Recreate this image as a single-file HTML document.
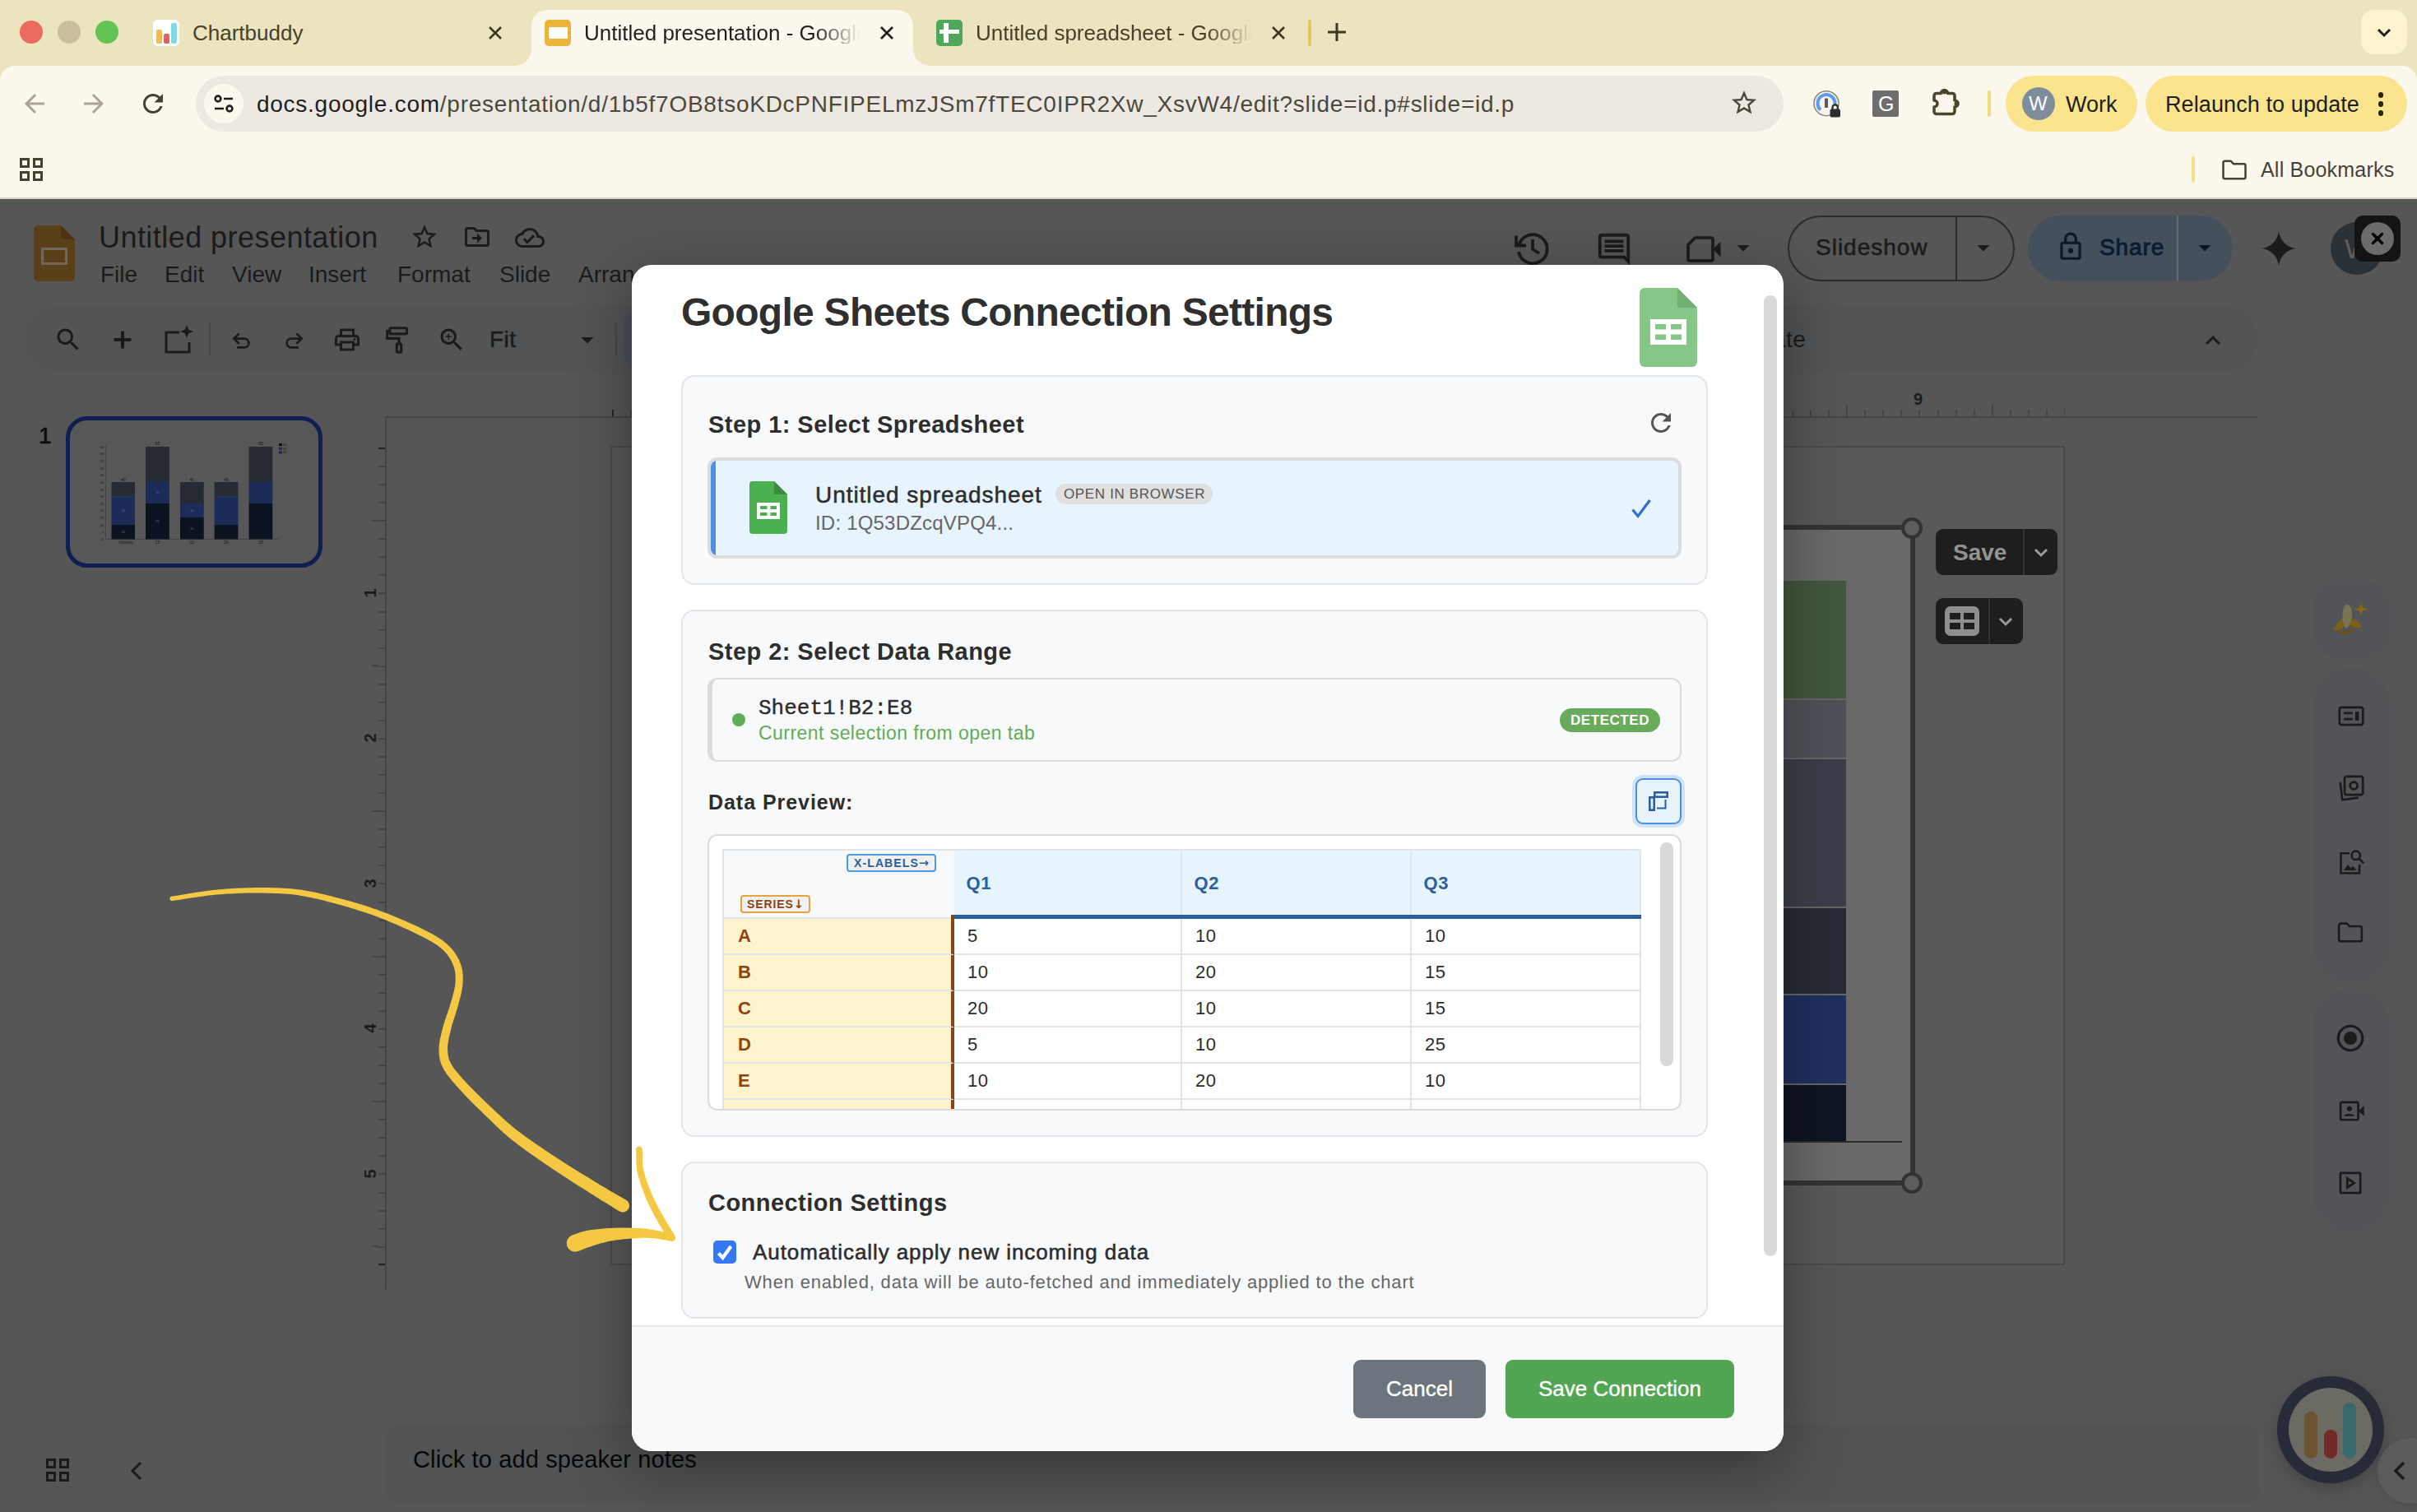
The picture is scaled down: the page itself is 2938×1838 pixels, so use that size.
<!DOCTYPE html>
<html lang="en">
<head>
<meta charset="utf-8">
<title>Untitled presentation - Google Slides</title>
<style>
*{box-sizing:border-box;margin:0;padding:0}
html,body{width:2938px;height:1838px;overflow:hidden;background:#565656}
body{position:relative;font-family:"Liberation Sans",sans-serif;color:#1f1f1f}
.a{position:absolute}
.t{position:absolute;white-space:nowrap;line-height:1}
svg{position:absolute;overflow:visible}
/* ---------- browser chrome ---------- */
#tabstrip{left:0;top:0;width:2938px;height:110px;background:#ece4bf}
#toolbar{left:0;top:80px;width:2938px;height:160px;background:#fdf8ed;border-radius:18px 18px 0 0}
#chromeline{left:0;top:240px;width:2938px;height:2px;background:#d9d3c2}
.tabtxt{font-size:26px;color:#45412a;top:27px;letter-spacing:0}
#omni{left:238px;top:92px;width:1930px;height:68px;border-radius:34px;background:#ede9e2}
.chip{border-radius:34px;background:#fbe48e;height:68px;top:92px}
/* ---------- dimmed page ---------- */
#page{left:0;top:0;width:2938px;height:1838px;background:#565656;overflow:hidden}
.mn{top:320px;font-size:28px}
.rn{font-size:20px;font-weight:bold;color:#1b1b1b}
.rv{transform:rotate(-90deg);transform-origin:center}
.dk{color:#1b1b1b}
/* ---------- modal ---------- */
#modal{left:768px;top:322px;width:1400px;height:1442px;border-radius:24px;background:#fff;box-shadow:0 20px 70px rgba(0,0,0,.36);overflow:hidden}
.card{background:#f8f9fa;border:2px solid #e2e5e9;border-radius:16px}
.h3{font-weight:bold;font-size:29px;color:#2d2d2d;letter-spacing:.45px}

.btn{border-radius:9px;color:#fff;-webkit-text-stroke:.35px #fff;font-size:26px;text-align:center;line-height:71px;white-space:nowrap}
table.pv{border-collapse:separate;table-layout:fixed;font-size:22px;color:#2d2d2d}
table.pv td,table.pv th{height:44px;padding:0 0 0 16px;text-align:left;vertical-align:middle;border-right:2px solid #e1e4e8;border-bottom:2px solid #e1e4e8;background:#fff;font-weight:normal;letter-spacing:.5px;white-space:nowrap}
table.pv th{padding-left:14.500px;height:85px;background:#e7f3fd;color:#2c5f9e;font-weight:bold;border-top:2px solid #e1e4e8;border-bottom:4px solid #2c5f9e;font-size:22px;letter-spacing:.6px}
table.pv th.c0{background:#f8f9fa;border-left:2px solid #e1e4e8;border-bottom:2px solid #e1e4e8;border-right:none;position:relative}
table.pv td.rl{background:#fdf3cd;color:#8b4513;font-weight:bold;border-left:2px solid #e1e4e8;border-right:4px solid #8b4513;padding-left:17px}
.xl,.sr{position:absolute;font-size:14px;font-weight:bold;letter-spacing:1.1px;line-height:18px;height:22px;border-radius:4px;background:#f0f0f0;white-space:nowrap}
.xl{right:22px;top:4px;border:2px solid #4a9be0;color:#2c5f9e;padding:0 7px}
.sr{left:20px;bottom:5px;border:2px solid #e6a23c;color:#8b4513;padding:0 6px;letter-spacing:.9px}
.ar{font-family:"DejaVu Sans",sans-serif;font-size:14.500px;letter-spacing:0;line-height:14px}
</style>
</head>
<body>
<!-- ======= PAGE (dimmed Google Slides) ======= -->
<div class="a" id="page">
<!--PAGE-START-->
<!-- slides header -->
<svg style="left:41px;top:274px" width="50" height="68" viewBox="0 0 50 68"><path d="M5 0h28l17 17v46a5 5 0 0 1-5 5H5a5 5 0 0 1-5-5V5a5 5 0 0 1 5-5z" fill="#5a4018"/><path d="M33 0l17 17H37a4 4 0 0 1-4-4z" fill="#4d3313"/><rect x="10.500" y="28.500" width="29" height="18" fill="none" stroke="#6f6759" stroke-width="3"/></svg>
<div class="t dk" style="left:120px;top:271px;font-size:36px;letter-spacing:.45px">Untitled presentation</div>
<svg style="left:498px;top:270px" width="36" height="36" viewBox="0 0 24 24"><path d="M22 9.24l-7.19-.62L12 2 9.19 8.630 2 9.240l5.460 4.730L5.820 21 12 17.270 18.180 21l-1.630-7.030L22 9.240zM12 15.400l-3.760 2.270 1-4.280-3.320-2.880 4.380-.38L12 6.100l1.710 4.040 4.380.38-3.320 2.880 1 4.280L12 15.400z" fill="#1b1b1b"/></svg>
<svg style="left:562px;top:270px" width="36" height="36" viewBox="0 0 24 24"><path d="M20 6h-8l-2-2H4c-1.100 0-2 .9-2 2v12c0 1.100.9 2 2 2h16c1.100 0 2-.9 2-2V8c0-1.100-.9-2-2-2zm0 12H4V6h5.170l2 2H20v10zm-8-1l4-4-4-4v3H8v2h4v3z" fill="#1b1b1b"/></svg>
<svg style="left:626px;top:271px" width="36" height="36" viewBox="0 0 24 24"><path d="M19.350 10.040C18.670 6.590 15.640 4 12 4 9.110 4 6.600 5.640 5.350 8.040 2.340 8.360 0 10.910 0 14c0 3.310 2.690 6 6 6h13c2.760 0 5-2.240 5-5 0-2.640-2.050-4.780-4.650-4.960zM19 18H6c-2.210 0-4-1.790-4-4 0-2.050 1.530-3.760 3.560-3.970l1.070-.11.5-.95C8.080 7.140 9.940 6 12 6c2.620 0 4.880 1.860 5.390 4.430l.3 1.500 1.530.11c1.560.1 2.780 1.410 2.780 2.960 0 1.650-1.350 3-3 3zm-9-3.820l-2.090-2.090L6.500 13.500 10 17l6.010-6.010-1.410-1.410z" fill="#1b1b1b"/></svg>
<div class="t dk mn" style="left:122px">File</div>
<div class="t dk mn" style="left:200px">Edit</div>
<div class="t dk mn" style="left:282px">View</div>
<div class="t dk mn" style="left:375px">Insert</div>
<div class="t dk mn" style="left:483px">Format</div>
<div class="t dk mn" style="left:607px">Slide</div>
<div class="t dk mn" style="left:703px">Arrange</div>
<div class="t dk mn" style="left:832px">Tools</div>
<div class="t dk mn" style="left:926px">Extensions</div>
<div class="t dk mn" style="left:1098px">Help</div>
<!-- toolbar pill -->
<div class="a" style="left:30px;top:372px;width:2714px;height:80px;border-radius:40px;background:#535456"></div>
<svg style="left:65px;top:395px" width="36" height="36" viewBox="0 0 24 24"><path d="M15.500 14h-.79l-.28-.27C15.410 12.590 16 11.110 16 9.500 16 5.910 13.090 3 9.500 3S3 5.910 3 9.500 5.910 16 9.500 16c1.610 0 3.090-.59 4.230-1.570l.27.28v.79l5 4.990L20.490 19l-4.990-5zm-6 0C7.010 14 5 11.990 5 9.500S7.010 5 9.500 5 14 7.010 14 9.500 11.990 14 9.500 14z" fill="#1b1b1b"/></svg>
<svg style="left:131px;top:395px" width="36" height="36" viewBox="0 0 24 24"><path d="M12 5v14M5 12h14" stroke="#1b1b1b" stroke-width="2.700" fill="none"/></svg>
<svg style="left:198px;top:394px" width="38" height="38" viewBox="0 0 38 38" fill="none" stroke="#1b1b1b" stroke-width="3"><path d="M20 10H4v24h28V22"/><path d="M29 1l2.200 5.800L37 9l-5.800 2.200L29 17l-2.200-5.800L21 9l5.800-2.200z" fill="#1b1b1b" stroke="none"/></svg>
<div class="a" style="left:254px;top:392px;width:2px;height:40px;background:#464749"></div>
<svg style="left:276px;top:396px" width="36" height="36" viewBox="0 0 24 24"><path d="M7.800 9.500H14a4.500 4.500 0 0 1 0 9H8v-1.800h6a2.700 2.700 0 0 0 0-5.400H7.800l2.600 2.600-1.300 1.300L4.300 10.400l4.800-4.800 1.300 1.300z" fill="#1b1b1b"/></svg>
<svg style="left:339px;top:396px" width="36" height="36" viewBox="0 0 24 24"><path d="M16.200 9.500H10a4.500 4.500 0 0 0 0 9h6v-1.800h-6a2.700 2.700 0 0 1 0-5.400h6.200l-2.600 2.600 1.300 1.300 4.800-4.800-4.800-4.800-1.300 1.300z" fill="#1b1b1b"/></svg>
<svg style="left:404px;top:395px" width="36" height="36" viewBox="0 0 24 24"><path d="M19 8h-1V3H6v5H5c-1.660 0-3 1.340-3 3v6h4v4h12v-4h4v-6c0-1.660-1.340-3-3-3zM8 5h8v3H8V5zm8 12v2H8v-4h8v2zm2-2v-2H6v2H4v-4c0-.55.45-1 1-1h14c.55 0 1 .45 1 1v4h-2z" fill="#1b1b1b"/><circle cx="18" cy="11.500" r="1" fill="#1b1b1b"/></svg>
<svg style="left:466px;top:394px" width="38" height="38" viewBox="0 0 24 24" fill="none" stroke="#1b1b1b" stroke-width="2"><rect x="5" y="3" width="13" height="4.500" rx="1"/><path d="M5 5.200H3V11h9v4"/><rect x="10.300" y="15" width="3.400" height="6.500" rx=".8"/></svg>
<svg style="left:531px;top:395px" width="36" height="36" viewBox="0 0 24 24"><path d="M15.500 14h-.79l-.28-.27C15.410 12.590 16 11.110 16 9.500 16 5.910 13.090 3 9.500 3S3 5.910 3 9.500 5.910 16 9.500 16c1.610 0 3.090-.59 4.230-1.570l.27.28v.79l5 4.990L20.490 19l-4.990-5zm-6 0C7.010 14 5 11.990 5 9.500S7.010 5 9.500 5 14 7.010 14 9.500 11.990 14 9.500 14zm.5-7H9v2H7v1h2v2h1v-2h2V9h-2z" fill="#1b1b1b"/></svg>
<div class="t dk" style="left:595px;top:399px;font-size:28px;letter-spacing:.5px;-webkit-text-stroke:.5px #1b1b1b">Fit</div>
<svg style="left:696px;top:395px" width="36" height="36" viewBox="0 0 24 24"><path d="M7 10l5 5 5-5z" fill="#1b1b1b"/></svg>
<div class="a" style="left:748px;top:392px;width:2px;height:40px;background:#464749"></div>
<div class="a" style="left:758px;top:382px;width:80px;height:60px;border-radius:10px;background:#494f5d"></div>
<div class="t dk" style="left:2155px;top:399px;font-size:28px;letter-spacing:.5px">ate</div>
<svg style="left:2672px;top:396px" width="36" height="36" viewBox="0 0 24 24"><path d="M12 8l-6 6 1.410 1.410L12 10.830l4.590 4.580L18 14z" fill="#1b1b1b"/></svg>
<!-- header right -->
<svg style="left:1841px;top:280px" width="44" height="44" viewBox="0 0 44 44" fill="none" stroke="#1b1b1b" stroke-width="3.800"><path d="M5.500 17.500A17.500 17.500 0 1 1 5 26"/><path d="M2 6.500v12h12" stroke-linejoin="miter"/><path d="M22 11v12l8 5"/></svg>
<svg style="left:1939px;top:280px" width="46" height="46" viewBox="0 0 24 24"><path d="M21.990 4c0-1.100-.89-2-1.990-2H4c-1.100 0-2 .9-2 2v12c0 1.100.9 2 2 2h14l4 4-.01-18zM20 4v13.170L18.830 16H4V4h16zM6 12h12v2H6zm0-3h12v2H6zm0-3h12v2H6z" fill="#1b1b1b"/></svg>
<svg style="left:2050px;top:287px" width="42" height="32" viewBox="0 0 42 32"><path d="M10.500 2H30a2 2 0 0 1 2 2v24a2 2 0 0 1-2 2H4a2 2 0 0 1-2-2V10.500z" fill="none" stroke="#1b1b1b" stroke-width="3.600" stroke-linejoin="round"/><path d="M32 16l9.500-9.500v19z" fill="#1b1b1b"/></svg>
<svg style="left:2101px;top:283px" width="36" height="36" viewBox="0 0 24 24"><path d="M7 10l5 5 5-5z" fill="#1b1b1b"/></svg>
<div class="a" style="left:2173px;top:262px;width:276px;height:80px;border-radius:40px;border:2px solid #2b2b2b"></div>
<div class="a" style="left:2377px;top:263px;width:2px;height:78px;background:#2b2b2b"></div>
<div class="t dk" style="left:2207px;top:287px;font-size:28px;letter-spacing:1px;-webkit-text-stroke:.55px #1b1b1b">Slideshow</div>
<svg style="left:2393px;top:283px" width="36" height="36" viewBox="0 0 24 24"><path d="M7 10l5 5 5-5z" fill="#1b1b1b"/></svg>
<div class="a" style="left:2465px;top:262px;width:249px;height:80px;border-radius:40px;background:#44515d"></div>
<div class="a" style="left:2646px;top:262px;width:1.500px;height:80px;background:#646a6e"></div>
<svg style="left:2498px;top:281px" width="38" height="38" viewBox="0 0 24 24"><path d="M18 8h-1V6c0-2.760-2.240-5-5-5S7 3.240 7 6v2H6c-1.100 0-2 .9-2 2v10c0 1.100.9 2 2 2h12c1.100 0 2-.9 2-2V10c0-1.100-.9-2-2-2zM9 6c0-1.660 1.340-3 3-3s3 1.340 3 3v2H9V6zm9 14H6V10h12v10zm-6-3c1.100 0 2-.9 2-2s-.9-2-2-2-2 .9-2 2 .9 2 2 2z" fill="#0d1826"/></svg>
<div class="t" style="left:2552px;top:287px;font-size:28px;color:#0b1b33;letter-spacing:.9px;-webkit-text-stroke:.9px #0b1b33">Share</div>
<svg style="left:2662px;top:283px" width="36" height="36" viewBox="0 0 24 24"><path d="M7 10l5 5 5-5z" fill="#0d1826"/></svg>
<svg style="left:2749px;top:281px" width="42" height="42" viewBox="0 0 42 42"><path d="M21 0C22.500 11.500 30.500 19.500 42 21 30.500 22.500 22.500 30.500 21 42 19.500 30.500 11.500 22.500 0 21 11.500 19.500 19.500 11.500 21 0z" fill="#1b1b1b"/></svg>
<div class="a" style="left:2833px;top:270px;width:64px;height:64px;border-radius:50%;background:#2a3237"></div>
<div class="t" style="left:2850px;top:285px;font-size:34px;color:#5e5e5e">W</div>
<div class="a" style="left:2862px;top:262px;width:56px;height:56px;border-radius:10px;background:#131313"></div>
<div class="a" style="left:2870px;top:270px;width:40px;height:40px;border-radius:50%;background:#6b6b6b"></div>
<svg style="left:2881px;top:281px" width="18" height="18" viewBox="0 0 18 18"><path d="M3.500 3.500l11 11M14.500 3.500l-11 11" stroke="#000" stroke-width="3.400" stroke-linecap="round" fill="none"/></svg>
<!--PAGE-END-->
<!--PAGE2-START-->
<!-- filmstrip -->
<div class="t" style="left:47px;top:516px;font-size:28px;color:#0a0a0a;-webkit-text-stroke:.7px #0a0a0a">1</div>
<div class="a" style="left:80px;top:506px;width:312px;height:184px;border-radius:26px;border:5px solid #0f1f52;background:#575757"></div>
<svg style="left:86px;top:512px" width="300" height="172" viewBox="86 512 300 172" font-family="Liberation Sans, sans-serif" font-size="5" fill="#151515">
<path d="M128.500 542v113.500H338" fill="none" stroke="#444" stroke-width="1"/>
<g fill="#252a33"><rect x="135.500" y="586" width="28.500" height="17.500"/><rect x="177" y="543" width="28.800" height="43"/><rect x="219" y="586" width="28.700" height="26"/><rect x="260.600" y="586" width="28.800" height="17.500"/><rect x="302.600" y="543" width="28.700" height="43"/></g>
<g fill="#1b2c59"><rect x="135.500" y="603.500" width="28.500" height="34.500"/><rect x="177" y="586" width="28.800" height="26"/><rect x="219" y="612" width="28.700" height="17"/><rect x="260.600" y="603.500" width="28.800" height="34.500"/><rect x="302.600" y="586" width="28.700" height="26"/></g>
<g fill="#0c1320"><rect x="135.500" y="638" width="28.500" height="17.500"/><rect x="177" y="612" width="28.800" height="43.500"/><rect x="219" y="629" width="28.700" height="26.500"/><rect x="260.600" y="638" width="28.800" height="17.500"/><rect x="302.600" y="612" width="28.700" height="43.500"/></g>
<g text-anchor="middle"><text x="149.700" y="584.500">40</text><text x="191.400" y="541">65</text><text x="233.300" y="584.500">40</text><text x="275" y="584.500">40</text><text x="317" y="541">65</text>
<text x="153" y="661">Options</text><text x="191.400" y="661">15</text><text x="233.300" y="661">10</text><text x="275" y="661">20</text><text x="317" y="661">15</text></g>
<g text-anchor="end" font-size="4"><text x="126" y="657">0</text><text x="126" y="648.400">5</text><text x="126" y="639.700">10</text><text x="126" y="631">15</text><text x="126" y="622.400">20</text><text x="126" y="613.700">25</text><text x="126" y="605">30</text><text x="126" y="596.500">35</text><text x="126" y="587.800">40</text><text x="126" y="579">45</text><text x="126" y="570.500">50</text><text x="126" y="561.800">55</text><text x="126" y="553">60</text><text x="126" y="544.500">65</text></g>
<g font-size="4"><rect x="339" y="539" width="4" height="3" fill="#0c1320"/><rect x="339" y="543.700" width="4" height="3" fill="#1b2c59"/><rect x="339" y="548.400" width="4" height="3" fill="#252a33"/><text x="344" y="542">15</text><text x="344" y="546.700">10</text><text x="344" y="551.400">15</text></g>
<g fill="#6d7484" font-size="3.500" text-anchor="middle"><text x="149.700" y="622">20</text><text x="149.700" y="648">10</text><text x="191.400" y="600">15</text><text x="191.400" y="635">25</text><text x="233.300" y="622">10</text><text x="233.300" y="644">15</text></g>
</svg>
<!-- rulers -->
<div class="a" style="left:468px;top:506px;width:2276px;height:2px;background:#454545"></div>
<div class="a" style="left:468px;top:506px;width:2px;height:1061px;background:#454545"></div>
<div class="a" style="left:744px;top:498px;width:1766px;height:8px;background:repeating-linear-gradient(90deg,#454545 0,#454545 2px,transparent 2px,transparent 22.0625px)"></div>
<div class="a" style="left:832.250px;top:491px;width:1700px;height:8px;background:repeating-linear-gradient(90deg,#454545 0,#454545 2px,transparent 2px,transparent 176.500px)"></div>
<div class="a" style="left:460px;top:544px;width:8px;height:995px;background:repeating-linear-gradient(180deg,#454545 0,#454545 2px,transparent 2px,transparent 22.0625px)"></div>
<div class="a" style="left:452px;top:632.250px;width:8px;height:900px;background:repeating-linear-gradient(180deg,#454545 0,#454545 2px,transparent 2px,transparent 176.500px)"></div>
<div class="a" style="left:460px;top:544px;width:8px;height:2px;background:#262626"></div>
<div class="a" style="left:460px;top:1536px;width:8px;height:2px;background:#262626"></div>
<div class="t rn" style="left:2326px;top:475px">9</div>
<div class="t rn rv" style="left:444px;top:711px">1</div>
<div class="t rn rv" style="left:444px;top:887px">2</div>
<div class="t rn rv" style="left:444px;top:1064px">3</div>
<div class="t rn rv" style="left:444px;top:1240px">4</div>
<div class="t rn rv" style="left:444px;top:1417px">5</div>
<!-- slide canvas -->
<div class="a" style="left:744px;top:498px;width:2px;height:8px;background:#262626"></div>
<div class="a" style="left:742px;top:542px;width:1768px;height:996px;border:2px solid #494949;background:#585858"></div>
<!-- chart object on slide (visible part) -->
<div class="a" style="left:2100px;top:644px;width:224px;height:792px;background:#696969"></div>
<div class="a" style="left:2100px;top:706px;width:144px;height:143px;background:#42573b"></div>
<div class="a" style="left:2100px;top:849px;width:144px;height:72px;background:#4e5258;border-top:2px solid #666"></div>
<div class="a" style="left:2100px;top:921px;width:144px;height:181px;background:#3a3e48;border-top:2px solid #666"></div>
<div class="a" style="left:2100px;top:1102px;width:144px;height:106px;background:#272b35;border-top:2px solid #666"></div>
<div class="a" style="left:2100px;top:1208px;width:144px;height:109px;background:#1f305e;border-top:2px solid #666"></div>
<div class="a" style="left:2100px;top:1317px;width:144px;height:71px;background:#0f1422;border-top:2px solid #666"></div>
<div class="a" style="left:2100px;top:1387px;width:212px;height:2px;background:#2a2a2a"></div>
<div class="a" style="left:2100px;top:638px;width:228px;height:803px;border:6px solid #333;border-left:none"></div>
<div class="a" style="left:2311px;top:629px;width:26px;height:26px;border-radius:50%;border:4px solid #333;background:#5d5d5d"></div>
<div class="a" style="left:2311px;top:1425px;width:26px;height:26px;border-radius:50%;border:4px solid #333;background:#5d5d5d"></div>
<!-- save / table buttons -->
<div class="a" style="left:2353px;top:643px;width:148px;height:56px;border-radius:9px;background:#1e1e1e"></div>
<div class="a" style="left:2459px;top:643px;width:2px;height:56px;background:#333"></div>
<div class="t" style="left:2374px;top:658px;font-size:28px;font-weight:bold;color:#939393;letter-spacing:0">Save</div>
<svg style="left:2469px;top:660px" width="24" height="24" viewBox="0 0 24 24"><path d="M5 8l7 7 7-7" fill="none" stroke="#9a9a9a" stroke-width="3"/></svg>
<div class="a" style="left:2353px;top:727px;width:106px;height:56px;border-radius:9px;background:#1e1e1e"></div>
<div class="a" style="left:2417px;top:727px;width:2px;height:56px;background:#333"></div>
<svg style="left:2364px;top:737px" width="42" height="36" viewBox="0 0 42 36"><rect x="0" y="0" width="42" height="36" rx="7" fill="#8e8e8e"/><path d="M6 8h13v8H6zM23 8h13v8H23zM6 20h13v8H6zM23 20h13v8H23z" fill="#1e1e1e"/></svg>
<svg style="left:2426px;top:744px" width="24" height="24" viewBox="0 0 24 24"><path d="M5 8l7 7 7-7" fill="none" stroke="#9a9a9a" stroke-width="3"/></svg>
<!-- right side panel -->
<div class="a" style="left:2812px;top:706px;width:93px;height:94px;border-radius:32px;background:#535457"></div>
<div class="a" style="left:2812px;top:812px;width:93px;height:382px;border-radius:46px;background:#535457"></div>
<div class="a" style="left:2812px;top:1202px;width:93px;height:295px;border-radius:46px;background:#535457"></div>
<svg style="left:2834px;top:732px" width="44" height="44" viewBox="0 0 44 44"><path d="M5 34C10 41 24 40 30 30 24 35 13 37 5 34z" fill="#6b4e10"/><path d="M15 20C9 22 4 28 3 35 9 35 15 31 18 27z" fill="#7d5f17"/><path d="M23 20C30 21 35 25 37 31 31 32 25 30 21 27z" fill="#7d5f17"/><path d="M18 3C22 2 25 7 25 15 25 23 22 29 18 32 14 29 13 19 14 11 14.500 7 16 4 18 3z" fill="#7b7453"/><path d="M36 1l2 5.500 5.500 2-5.500 2-2 5.500-2-5.500-5.500-2 5.500-2z" fill="#8a6512"/></svg>
<svg style="left:2842px;top:857px" width="32" height="27" viewBox="0 0 36 30" fill="none" stroke="#1b1b1b" stroke-width="3"><rect x="2" y="3" width="32" height="24" rx="3"/><path d="M8 11h12M8 19h12" /><path d="M26 9v12" stroke-width="5"/></svg>
<svg style="left:2842px;top:942px" width="32" height="34" viewBox="0 0 36 38" fill="none" stroke="#1b1b1b" stroke-width="3"><rect x="9" y="2" width="25" height="25" rx="3"/><path d="M3 10l3 24 22-3"/><circle cx="21.500" cy="14.500" r="5"/></svg>
<svg style="left:2842px;top:1032px" width="33" height="33" viewBox="0 0 38 38" fill="none" stroke="#1b1b1b" stroke-width="3"><path d="M16 6H4v28h26V22"/><circle cx="25" cy="9" r="6"/><path d="M29.500 13.500L36 20"/><path d="M8 30l6-8 4 5 3-3 5 6z" fill="#1b1b1b" stroke="none"/></svg>
<svg style="left:2841px;top:1120px" width="32" height="26" viewBox="0 0 36 30" fill="none" stroke="#1b1b1b" stroke-width="3" stroke-linejoin="round"><path d="M2 6a3 3 0 0 1 3-3h8l4 4h14a3 3 0 0 1 3 3v15a3 3 0 0 1-3 3H5a3 3 0 0 1-3-3z"/></svg>
<svg style="left:2840px;top:1244.500px" width="34" height="34" viewBox="0 0 38 38"><circle cx="19" cy="19" r="16.500" fill="none" stroke="#1b1b1b" stroke-width="3.500"/><circle cx="19" cy="19" r="9" fill="#1b1b1b"/></svg>
<svg style="left:2843px;top:1338px" width="31" height="25" viewBox="0 0 34 28"><rect x="2" y="2" width="24" height="24" rx="2" fill="none" stroke="#1b1b1b" stroke-width="3"/><path d="M26 14l8-7v14z" fill="#1b1b1b"/><circle cx="14" cy="11" r="3.500" fill="#1b1b1b"/><path d="M7 21c0-4 14-4 14 0z" fill="#1b1b1b"/></svg>
<svg style="left:2843px;top:1424px" width="28" height="28" viewBox="0 0 30 30" fill="none" stroke="#1b1b1b" stroke-width="3"><rect x="2" y="2" width="26" height="26" rx="1"/><path d="M11 9v12l9-6z"/></svg>
<!-- speaker notes / bottom -->
<div class="a" style="left:469px;top:1731px;width:2277px;height:97px;border-radius:18px;background:#525355"></div>
<div class="t" style="left:502px;top:1760px;font-size:29px;color:#070707;letter-spacing:.12px">Click to add speaker notes</div>
<svg style="left:56px;top:1773px" width="28" height="28" viewBox="0 0 28 28" fill="none" stroke="#1b1b1b" stroke-width="3"><rect x="1.500" y="1.500" width="9" height="9"/><rect x="17.500" y="1.500" width="9" height="9"/><rect x="1.500" y="17.500" width="9" height="9"/><rect x="17.500" y="17.500" width="9" height="9"/></svg>
<svg style="left:157px;top:1776px" width="18" height="24" viewBox="0 0 18 24"><path d="M14 2L4 12l10 10" fill="none" stroke="#1b1b1b" stroke-width="3"/></svg>
<!-- chartbuddy FAB -->
<div class="a" style="left:2768px;top:1673px;width:130px;height:130px;border-radius:50%;background:#272a37;box-shadow:0 6px 18px rgba(0,0,0,.22)"></div>
<div class="a" style="left:2782px;top:1687px;width:102px;height:102px;border-radius:50%;background:#6b6a63"></div>
<div class="a" style="left:2801px;top:1716px;width:16px;height:57px;border-radius:8px;background:#6b5530"></div>
<div class="a" style="left:2825px;top:1738px;width:16px;height:35px;border-radius:8px;background:#722b29"></div>
<div class="a" style="left:2848px;top:1705px;width:16px;height:68px;border-radius:8px;background:#396a6c"></div>
<div class="a" style="left:2890px;top:1748px;width:80px;height:80px;border-radius:50%;background:#5a5b5d;box-shadow:0 2px 8px rgba(0,0,0,.14)"></div>
<svg style="left:2908px;top:1776px" width="18" height="24" viewBox="0 0 18 24"><path d="M14 2L4 12l10 10" fill="none" stroke="#1b1b1b" stroke-width="3.500"/></svg>
<!--PAGE2-END-->
</div>

<!-- ======= BROWSER CHROME ======= -->
<div class="a" id="tabstrip"></div>
<div class="a" id="toolbar"></div>
<div class="a" id="chromeline"></div>
<!--CHROME-START-->
<!-- traffic lights -->
<div class="a" style="left:24px;top:25px;width:28px;height:28px;border-radius:50%;background:#ec6a5e"></div>
<div class="a" style="left:70px;top:25px;width:28px;height:28px;border-radius:50%;background:#c9bf9d"></div>
<div class="a" style="left:116px;top:25px;width:28px;height:28px;border-radius:50%;background:#61c454"></div>
<!-- tab 1 -->
<div class="a" style="left:186px;top:24px;width:32px;height:32px;border-radius:6px;background:#fff"></div>
<div class="a" style="left:190px;top:36px;width:7px;height:17px;border-radius:2px;background:#f2b95b"></div>
<div class="a" style="left:199px;top:41px;width:7px;height:12px;border-radius:2px;background:#e3605c"></div>
<div class="a" style="left:208px;top:28px;width:7px;height:25px;border-radius:2px;background:#7edae4"></div>
<div class="t tabtxt" style="left:234px">Chartbuddy</div>
<svg style="left:590px;top:28px" width="24" height="24" viewBox="0 0 24 24"><path d="M5 5l14 14M19 5L5 19" stroke="#3b3827" stroke-width="2.6" fill="none"/></svg>
<!-- active tab -->
<svg style="left:622px;top:12px" width="512" height="70" viewBox="0 0 512 70"><path d="M0 70 L0 68 Q24 68 24 44 L24 22 Q24 0 46 0 L466 0 Q488 0 488 22 L488 44 Q488 68 512 68 L512 70 Z" fill="#fdf8ed"/></svg>
<div class="a" style="left:662px;top:24px;width:32px;height:32px;border-radius:5px;background:#ecb43c"></div>
<div class="a" style="left:667px;top:33px;width:23px;height:14px;background:#fff"></div>
<div class="t tabtxt" style="left:710px;color:#1f1f1f;width:338px;overflow:hidden;-webkit-mask-image:linear-gradient(90deg,#000 280px,transparent 336px);mask-image:linear-gradient(90deg,#000 280px,transparent 336px)">Untitled presentation - Google Slides</div>
<svg style="left:1066px;top:28px" width="24" height="24" viewBox="0 0 24 24"><path d="M5 5l14 14M19 5L5 19" stroke="#1f1f1f" stroke-width="2.6" fill="none"/></svg>
<!-- tab 3 -->
<div class="a" style="left:1138px;top:24px;width:32px;height:32px;border-radius:5px;background:#4fa75a"></div>
<div class="a" style="left:1147px;top:28px;width:6px;height:24px;background:#fff"></div>
<div class="a" style="left:1142px;top:36px;width:24px;height:5px;background:#fff"></div>
<div class="t tabtxt" style="left:1186px;width:338px;overflow:hidden;-webkit-mask-image:linear-gradient(90deg,#000 280px,transparent 336px);mask-image:linear-gradient(90deg,#000 280px,transparent 336px)">Untitled spreadsheet - Google Sheets</div>
<svg style="left:1542px;top:28px" width="24" height="24" viewBox="0 0 24 24"><path d="M5 5l14 14M19 5L5 19" stroke="#3b3827" stroke-width="2.6" fill="none"/></svg>
<div class="a" style="left:1590px;top:24px;width:4px;height:32px;border-radius:2px;background:#e3c55a"></div>
<svg style="left:1611px;top:25px" width="28" height="28" viewBox="0 0 28 28"><path d="M14 3v22M3 14h22" stroke="#3b3827" stroke-width="3" fill="none"/></svg>
<div class="a" style="left:2870px;top:12px;width:56px;height:54px;border-radius:16px;background:#fdf3cf"></div>
<svg style="left:2888px;top:30px" width="20" height="20" viewBox="0 0 20 20"><path d="M3 6l7 7 7-7" stroke="#1f1f1f" stroke-width="3" fill="none"/></svg>
<!-- toolbar -->
<svg style="left:24px;top:108px" width="36" height="36" viewBox="0 0 24 24"><path d="M20 11H7.83l5.59-5.59L12 4l-8 8 8 8 1.41-1.41L7.83 13H20v-2z" fill="#aaa598"/></svg>
<svg style="left:96px;top:108px" width="36" height="36" viewBox="0 0 24 24"><path d="M12 4l-1.41 1.41L16.17 11H4v2h12.17l-5.58 5.59L12 20l8-8z" fill="#aaa598"/></svg>
<svg style="left:168px;top:108px" width="36" height="36" viewBox="0 0 24 24"><path d="M17.65 6.35C16.2 4.9 14.21 4 12 4c-4.42 0-7.99 3.58-7.99 8s3.57 8 7.99 8c3.73 0 6.84-2.55 7.73-6h-2.08c-.82 2.33-3.04 4-5.65 4-3.31 0-6-2.69-6-6s2.69-6 6-6c1.66 0 3.14.69 4.22 1.78L13 11h7V4l-2.35 2.35z" fill="#45412f"/></svg>
<div class="a" id="omni"></div>
<div class="a" style="left:248px;top:102px;width:48px;height:48px;border-radius:50%;background:#fdf8ed"></div>
<svg style="left:258px;top:112px" width="28" height="28" viewBox="0 0 28 28" fill="none" stroke="#1f1f1f" stroke-width="2.6"><circle cx="7" cy="8" r="3.4"/><path d="M14 8h11M3 20h11"/><circle cx="21" cy="20" r="3.4"/></svg>
<div class="t" style="left:312px;top:112.500px;font-size:28px;letter-spacing:.74px;color:#4b483d"><span style="color:#1f1f1f">docs.google.com</span>/presentation/d/1b5f7OB8tsoKDcPNFIPELmzJSm7fTEC0IPR2Xw_XsvW4/edit?slide=id.p#slide=id.p</div>
<svg style="left:2102px;top:107px" width="36" height="36" viewBox="0 0 24 24"><path d="M22 9.24l-7.19-.62L12 2 9.19 8.63 2 9.24l5.46 4.73L5.82 21 12 17.27 18.18 21l-1.63-7.03L22 9.24zM12 15.4l-3.76 2.27 1-4.28-3.32-2.88 4.38-.38L12 6.1l1.71 4.04 4.38.38-3.32 2.88 1 4.28L12 15.4z" fill="#4a4739"/></svg>
<!-- ext icons -->
<svg style="left:2201px;top:107px" width="40" height="40" viewBox="0 0 40 40"><circle cx="19" cy="18.700" r="15" fill="#f4f3ee" stroke="#8b8a80" stroke-width="1.600"/><path d="M12 26.500A10.500 10.500 0 1 1 29.500 19" fill="none" stroke="#5b9cf0" stroke-width="4"/><rect x="17" y="12.500" width="4" height="11.500" rx="1" fill="#5a5a5a"/><rect x="23.500" y="25.500" width="12.500" height="10" rx="2" fill="#2d2d2d"/><path d="M26.500 26v-2.500a3.200 3.200 0 0 1 6.400 0V26" fill="none" stroke="#2d2d2d" stroke-width="2.400"/></svg>
<div class="a" style="left:2276px;top:110px;width:32px;height:32px;background:#6d6d6d;border-radius:2px"></div>
<div class="t" style="left:2283px;top:114px;font-size:25px;color:#fff">G</div>
<svg style="left:2348px;top:105px" width="38" height="38" viewBox="0 0 38 38"><path d="M6 8.500H11.500a4 4 0 0 1 8 0H25a3 3 0 0 1 3 3V17a4 4 0 0 1 0 8v5.500a3 3 0 0 1-3 3H6a3 3 0 0 1-3-3V25a4 4 0 0 0 0-8V11.500a3 3 0 0 1 3-3z" fill="none" stroke="#4b452e" stroke-width="3.600" stroke-linejoin="round"/><circle cx="15.500" cy="6.500" r="3" fill="#4b452e"/><circle cx="30.500" cy="21" r="3" fill="#4b452e"/></svg>
<div class="a" style="left:2416px;top:110px;width:4px;height:32px;border-radius:2px;background:#f3dc7c"></div>
<div class="a chip" style="left:2438px;width:160px"></div>
<div class="a" style="left:2458px;top:106px;width:40px;height:40px;border-radius:50%;background:#7d8d9c"></div>
<div class="t" style="left:2466px;top:114px;font-size:24px;color:#fff">W</div>
<div class="t" style="left:2511px;top:114px;font-size:27px;color:#1f1f1f">Work</div>
<div class="a chip" style="left:2608px;width:318px"></div>
<div class="t" style="left:2632px;top:114px;font-size:27px;letter-spacing:.1px;color:#1f1f1f">Relaunch to update</div>
<div class="a" style="left:2890.500px;top:112px;width:6.500px;height:6.500px;border-radius:50%;background:#2a2208;box-shadow:0 11px 0 #2a2208,0 22px 0 #2a2208"></div>
<!-- bookmarks bar -->
<svg style="left:24px;top:192px" width="28" height="28" viewBox="0 0 28 28" fill="none" stroke="#45412f" stroke-width="3"><rect x="1.500" y="1.500" width="9" height="9"/><rect x="17.500" y="1.500" width="9" height="9"/><rect x="1.500" y="17.500" width="9" height="9"/><rect x="17.500" y="17.500" width="9" height="9"/></svg>
<div class="a" style="left:2664px;top:190px;width:4px;height:32px;border-radius:2px;background:#f5df85"></div>
<svg style="left:2700px;top:193px" width="32" height="27" viewBox="0 0 34 30" fill="none" stroke="#46423a" stroke-width="2.8" stroke-linejoin="round"><path d="M2 5a2 2 0 0 1 2-2h8l4 4h14a2 2 0 0 1 2 2v16a2 2 0 0 1-2 2H4a2 2 0 0 1-2-2z"/></svg>
<div class="t" style="left:2748px;top:194px;font-size:25px;letter-spacing:.2px;color:#46423a">All Bookmarks</div>
<!--CHROME-END-->

<!-- ======= ARROW ======= -->
<!--ARROW-->

<!-- ======= MODAL ======= -->
<div class="a" id="modal">
<!--MODAL-START-->
<!-- coordinates inside modal are relative to (768,322) -->
<div class="t" style="left:60px;top:34px;font-size:48px;font-weight:bold;color:#2f2f2f;letter-spacing:-.72px">Google Sheets Connection Settings</div>
<!-- big sheets icon -->
<svg style="left:1225px;top:28px" width="70" height="96" viewBox="0 0 70 96"><path d="M6 0h40l24 24v66a6 6 0 0 1-6 6H6a6 6 0 0 1-6-6V6a6 6 0 0 1 6-6z" fill="#86c787"/><path d="M46 0l24 24H46z" fill="#74b076"/><path d="M13 38h44v31H13zM19 44v6.500h13V44zM38 44v6.500h13V44zM19 56.500V63h13v-6.500zM38 56.500V63h13v-6.500z" fill="#fff" fill-rule="evenodd"/></svg>
<!-- scrollbar -->
<div class="a" style="left:1376px;top:37px;width:16px;height:1168px;border-radius:8px;background:#d9d9d9"></div>

<!-- CARD 1 -->
<div class="a card" style="left:60px;top:134px;width:1248px;height:255px"></div>
<div class="t h3" style="left:93px;top:180px">Step 1: Select Spreadsheet</div>
<svg style="left:1233px;top:174px" width="36" height="36" viewBox="0 0 24 24"><path d="M17.650 6.350C16.200 4.900 14.210 4 12 4c-4.420 0-7.990 3.580-7.990 8s3.570 8 7.990 8c3.730 0 6.840-2.550 7.730-6h-2.080c-.82 2.330-3.040 4-5.650 4-3.310 0-6-2.690-6-6s2.690-6 6-6c1.660 0 3.140.69 4.220 1.780L13 11h7V4l-2.350 2.350z" fill="#555"/></svg>
<div class="a" style="left:92px;top:234px;width:1184px;height:123px;border-radius:12px;border:4px solid #dcdcde;background:#e7f3fd;overflow:hidden"><div class="a" style="left:0;top:0;width:6px;height:100%;background:#4a90e2"></div></div>
<svg style="left:143px;top:263px" width="46" height="64" viewBox="0 0 46 64"><path d="M4 0h26l16 16v44a4 4 0 0 1-4 4H4a4 4 0 0 1-4-4V4a4 4 0 0 1 4-4z" fill="#4caf50"/><path d="M30 0l16 16H30z" fill="#3b8a3e"/><path d="M9 26h28v20H9zM13 30v4h8.500v-4zM25.500 30v4H33v-4zM13 38v4h8.500v-4zM25.500 38v4H33v-4z" fill="#fff" fill-rule="evenodd"/></svg>
<div class="t" style="left:223px;top:265.500px;font-size:28px;color:#2d2d2d;letter-spacing:.95px;-webkit-text-stroke:.5px #2d2d2d">Untitled spreadsheet</div>
<div class="a" style="left:515px;top:266px;width:191px;height:25px;border-radius:13px;background:#e0e0e0"></div>
<div class="t" style="left:525px;top:270px;font-size:17px;color:#555;letter-spacing:.65px">OPEN IN BROWSER</div>
<div class="t" style="left:223px;top:302px;font-size:24px;color:#666;letter-spacing:.2px">ID: 1Q53DZcqVPQ4...</div>
<svg style="left:1214px;top:284px" width="26" height="24" viewBox="0 0 26 24"><path d="M2.500 13.500L9 21.500 23.500 2" fill="none" stroke="#2f6fd0" stroke-width="3.200"/></svg>

<!-- CARD 2 -->
<div class="a card" style="left:60px;top:419px;width:1248px;height:641px"></div>
<div class="t h3" style="left:93px;top:455.500px">Step 2: Select Data Range</div>
<div class="a" style="left:92px;top:502px;width:1184px;height:102px;border-radius:12px;border:2px solid #dcdcde;border-left-width:6px;background:#f8f9fa"></div>
<div class="a" style="left:122px;top:545px;width:16px;height:16px;border-radius:50%;background:#5fad56"></div>
<div class="t" style="left:154px;top:526px;font-size:26px;font-family:'Liberation Mono',monospace;color:#2d2d2d;-webkit-text-stroke:.4px #2d2d2d">Sheet1!B2:E8</div>
<div class="t" style="left:154px;top:558px;font-size:23px;color:#5fad56;letter-spacing:.45px">Current selection from open tab</div>
<div class="a" style="left:1128px;top:539px;width:122px;height:29px;border-radius:15px;background:#68ab5c"></div>
<div class="t" style="left:1141px;top:545px;font-size:17px;font-weight:bold;color:#fff;letter-spacing:.55px">DETECTED</div>
<div class="t" style="left:93px;top:641px;font-size:25px;font-weight:bold;color:#2d2d2d;letter-spacing:.95px">Data Preview:</div>
<div class="a" style="left:1220px;top:624px;width:56px;height:56px;border-radius:9px;border:2.500px solid #4a90e2;background:#e7f3fd;box-shadow:0 0 0 4px rgba(74,144,226,.22)"></div>
<svg style="left:1235px;top:639px" width="26" height="26" viewBox="0 0 26 26" fill="none" stroke="#2c5f9e" stroke-width="2.600"><rect x="8.300" y="2.300" width="15.400" height="5.400"/><rect x="2.300" y="8.300" width="5.400" height="15.400"/><path d="M21.500 11v10.500H11" stroke-width="2"/></svg>
<!-- preview container -->
<div class="a" style="left:92px;top:692px;width:1184px;height:336px;border-radius:12px;border:2px solid #dcdcde;background:#fff;overflow:hidden">
<!-- inside: relative to (862,1016) page coords -->
<div class="a" style="left:1156px;top:8px;width:16px;height:272px;border-radius:8px;background:#d9d9d9"></div>
<table cellspacing="0" class="pv" style="position:absolute;left:16px;top:16px;width:1117px">
<colgroup><col style="width:282px"><col style="width:277px"><col style="width:279px"><col style="width:279px"></colgroup>
<tr class="hd"><th class="c0"><span class="xl">X-LABELS<b class="ar">→</b></span><span class="sr">SERIES<b class="ar">↓</b></span></th><th>Q1</th><th>Q2</th><th>Q3</th></tr>
<tr><td class="rl">A</td><td>5</td><td>10</td><td>10</td></tr>
<tr><td class="rl">B</td><td>10</td><td>20</td><td>15</td></tr>
<tr><td class="rl">C</td><td>20</td><td>10</td><td>15</td></tr>
<tr><td class="rl">D</td><td>5</td><td>10</td><td>25</td></tr>
<tr><td class="rl">E</td><td>10</td><td>20</td><td>10</td></tr>
<tr><td class="rl">F</td><td>15</td><td>10</td><td>20</td></tr>
</table>
<div class="a" style="left:298px;top:96px;width:835px;height:4px;background:#2c5f9e"></div><div class="a" style="left:294px;top:96px;width:4px;height:6px;background:#8b4513"></div>
</div>

<!-- CARD 3 -->
<div class="a card" style="left:60px;top:1090px;width:1248px;height:191px"></div>
<div class="t h3" style="left:93px;top:1126px">Connection Settings</div>
<div class="a" style="left:99px;top:1186px;width:28px;height:28px;border-radius:5px;background:#3478f6"></div>
<svg style="left:99px;top:1186px" width="28" height="28" viewBox="0 0 28 28"><path d="M6.500 15.500l5 5.500L21.500 7" fill="none" stroke="#fff" stroke-width="4.200"/></svg>
<div class="t" style="left:147px;top:1187px;font-size:26px;color:#2d2d2d;letter-spacing:.92px;-webkit-text-stroke:.55px #2d2d2d">Automatically apply new incoming data</div>
<div class="t" style="left:137px;top:1226px;font-size:22px;color:#666;letter-spacing:.82px">When enabled, data will be auto-fetched and immediately applied to the chart</div>

<!-- FOOTER -->
<div class="a" style="left:0;top:1289px;width:1400px;height:153px;background:#f8f9fa;border-top:2px solid #e5e7eb"></div>
<div class="a btn" style="left:877px;top:1331px;width:161px;height:71px;background:#6c757d">Cancel</div>
<div class="a btn" style="left:1062px;top:1331px;width:278px;height:71px;background:#52a552">Save Connection</div>
<!--MODAL-END-->
</div>
<!--ARROW-START-->
<svg style="left:0;top:0" width="2938" height="1838" viewBox="0 0 2938 1838"><g fill="#f5c843"><path d="M208.7,1089.5 213.2,1088.9 217.7,1088.2 222.2,1087.4 226.7,1086.7 231.2,1086.0 235.7,1085.3 240.2,1084.6 244.7,1083.9 249.2,1083.3 253.6,1082.7 258.0,1082.1 262.4,1081.7 266.7,1081.2 270.9,1080.9 275.1,1080.5 279.3,1080.2 283.5,1080.0 287.6,1079.7 291.7,1079.6 295.8,1079.4 299.9,1079.3 304.0,1079.2 308.1,1079.1 312.3,1079.1 316.4,1079.1 320.6,1079.1 324.7,1079.1 328.9,1079.1 333.0,1079.2 337.2,1079.3 341.4,1079.4 345.6,1079.7 349.7,1079.9 353.9,1080.3 358.1,1080.7 362.3,1081.2 366.5,1081.8 370.7,1082.4 374.9,1083.2 379.1,1084.0 383.3,1084.8 387.5,1085.7 391.7,1086.7 395.8,1087.7 400.0,1088.7 404.2,1089.8 408.3,1090.9 412.5,1091.9 416.6,1093.0 420.8,1094.2 424.9,1095.3 429.1,1096.5 433.3,1097.7 437.4,1099.0 441.6,1100.3 445.8,1101.6 449.9,1103.0 454.1,1104.4 458.3,1105.8 462.5,1107.4 466.7,1108.9 471.1,1110.6 475.5,1112.4 479.9,1114.2 484.4,1116.0 488.8,1117.9 493.1,1119.8 497.3,1121.7 501.4,1123.5 505.4,1125.3 509.1,1127.1 512.6,1128.8 515.8,1130.4 518.9,1132.0 521.9,1133.5 524.7,1135.0 527.4,1136.5 529.9,1138.0 532.4,1139.5 534.7,1141.1 537.0,1142.6 539.2,1144.2 541.3,1145.9 543.3,1147.6 545.2,1149.4 547.0,1151.2 548.8,1153.1 550.4,1154.9 551.8,1156.8 553.2,1158.8 554.5,1160.7 555.7,1162.7 556.8,1164.7 557.8,1166.7 558.7,1168.6 559.5,1170.7 560.3,1172.7 560.9,1174.8 561.4,1176.9 561.9,1178.9 562.2,1181.0 562.4,1183.1 562.6,1185.2 562.7,1187.3 562.7,1189.4 562.7,1191.5 562.6,1193.6 562.5,1195.8 562.3,1198.0 562.0,1200.3 561.6,1202.6 561.2,1204.9 560.7,1207.3 560.2,1209.6 559.6,1211.9 559.0,1214.2 558.4,1216.4 557.8,1218.7 557.2,1220.9 556.6,1223.1 556.0,1225.4 555.3,1227.7 554.6,1230.0 553.9,1232.2 553.2,1234.5 552.4,1236.7 551.7,1238.9 551.0,1241.0 550.4,1243.2 549.7,1245.3 549.1,1247.4 548.6,1249.6 548.1,1251.8 547.5,1254.0 547.0,1256.3 546.4,1258.5 545.9,1260.7 545.5,1262.9 545.0,1265.1 544.7,1267.2 544.4,1269.2 544.2,1271.2 544.1,1273.0 544.0,1274.8 544.1,1276.6 544.2,1278.4 544.3,1280.0 544.5,1281.6 544.7,1283.1 545.0,1284.5 545.3,1286.0 545.8,1287.4 546.3,1288.9 547.0,1290.4 547.7,1292.0 548.6,1293.7 549.6,1295.4 550.7,1297.1 552.0,1298.9 553.4,1300.7 554.8,1302.6 556.5,1304.6 558.2,1306.6 560.0,1308.6 561.8,1310.7 563.8,1312.8 565.8,1315.0 567.8,1317.2 569.9,1319.5 572.1,1321.8 574.4,1324.1 576.8,1326.6 579.3,1329.0 581.8,1331.5 584.4,1334.0 587.0,1336.5 589.6,1339.0 592.2,1341.5 594.9,1344.0 597.5,1346.5 600.1,1348.9 602.7,1351.4 605.2,1353.8 607.8,1356.1 610.3,1358.5 612.9,1360.8 615.5,1363.2 618.3,1365.6 621.1,1368.0 624.0,1370.4 627.1,1372.9 630.4,1375.5 633.9,1378.1 637.7,1380.9 641.6,1383.7 645.6,1386.5 649.8,1389.4 654.0,1392.3 658.4,1395.2 662.7,1398.2 667.1,1401.1 671.4,1403.9 675.7,1406.8 679.9,1409.5 684.1,1412.2 688.4,1415.0 692.7,1417.7 697.1,1420.5 701.5,1423.2 705.8,1425.9 710.1,1428.5 714.3,1431.1 718.4,1433.6 722.3,1436.0 726.1,1438.2 729.6,1440.4 732.8,1442.3 735.9,1444.1 738.7,1445.8 741.4,1447.4 744.0,1448.9 746.4,1450.3 748.8,1451.7 751.2,1453.0 753.6,1454.4 756.1,1455.8 758.6,1457.2 761.2,1458.7 763.5,1460.8 764.8,1463.6 765.0,1466.8 763.9,1469.7 761.8,1472.0 759.0,1473.4 755.9,1473.5 752.9,1472.5 750.4,1470.9 748.0,1469.4 745.6,1468.0 743.3,1466.5 740.9,1465.1 738.5,1463.6 736.1,1462.1 733.5,1460.5 730.8,1458.9 728.0,1457.1 724.9,1455.2 721.7,1453.1 718.2,1450.9 714.5,1448.6 710.6,1446.1 706.6,1443.6 702.4,1440.9 698.1,1438.2 693.8,1435.4 689.4,1432.6 685.0,1429.7 680.7,1426.8 676.4,1424.0 672.2,1421.2 668.0,1418.3 663.7,1415.4 659.4,1412.5 655.0,1409.5 650.7,1406.4 646.4,1403.4 642.1,1400.4 637.9,1397.4 633.8,1394.4 629.8,1391.4 626.0,1388.6 622.4,1385.7 619.0,1383.0 615.8,1380.3 612.8,1377.7 609.9,1375.1 607.1,1372.5 604.4,1370.0 601.8,1367.5 599.3,1365.0 596.8,1362.6 594.3,1360.1 591.8,1357.7 589.2,1355.2 586.6,1352.7 584.0,1350.1 581.3,1347.6 578.7,1345.0 576.1,1342.4 573.5,1339.8 571.0,1337.3 568.5,1334.7 566.1,1332.2 563.7,1329.7 561.5,1327.3 559.4,1325.0 557.3,1322.7 555.3,1320.5 553.4,1318.3 551.4,1316.1 549.6,1313.9 547.8,1311.8 546.1,1309.6 544.5,1307.5 542.9,1305.4 541.5,1303.2 540.1,1301.1 538.9,1298.9 537.9,1296.8 536.9,1294.7 536.1,1292.7 535.5,1290.7 534.9,1288.7 534.5,1286.8 534.1,1284.8 533.9,1282.8 533.7,1280.9 533.6,1278.9 533.5,1276.9 533.5,1274.7 533.6,1272.5 533.8,1270.2 534.1,1267.8 534.5,1265.5 534.9,1263.1 535.4,1260.8 536.0,1258.5 536.5,1256.1 537.1,1253.8 537.7,1251.6 538.3,1249.3 538.9,1247.1 539.5,1244.8 540.2,1242.5 540.9,1240.2 541.7,1238.0 542.4,1235.8 543.2,1233.5 544.0,1231.3 544.7,1229.2 545.5,1227.0 546.2,1224.9 546.8,1222.8 547.4,1220.6 548.1,1218.4 548.7,1216.2 549.4,1213.9 550.0,1211.7 550.6,1209.5 551.2,1207.3 551.7,1205.2 552.2,1203.1 552.7,1201.0 553.0,1199.0 553.3,1197.0 553.5,1195.1 553.6,1193.2 553.7,1191.2 553.7,1189.4 553.7,1187.5 553.6,1185.7 553.5,1184.0 553.3,1182.2 553.0,1180.5 552.7,1178.9 552.2,1177.2 551.7,1175.6 551.1,1173.9 550.5,1172.2 549.7,1170.5 548.9,1168.7 548.0,1167.0 547.0,1165.3 546.0,1163.7 544.8,1162.0 543.6,1160.3 542.2,1158.7 540.8,1157.1 539.3,1155.5 537.6,1154.0 535.9,1152.4 534.0,1151.0 532.1,1149.5 530.0,1148.1 527.8,1146.7 525.6,1145.3 523.1,1143.9 520.6,1142.5 517.9,1141.0 515.0,1139.6 512.0,1138.0 508.8,1136.4 505.4,1134.7 501.8,1132.9 497.9,1131.1 493.9,1129.2 489.7,1127.4 485.5,1125.5 481.1,1123.6 476.8,1121.7 472.4,1119.9 468.1,1118.1 463.8,1116.4 459.7,1114.8 455.6,1113.3 451.5,1111.8 447.4,1110.4 443.3,1109.0 439.2,1107.7 435.1,1106.4 431.0,1105.1 426.9,1103.9 422.8,1102.6 418.7,1101.5 414.6,1100.3 410.5,1099.2 406.4,1098.1 402.3,1097.0 398.2,1095.9 394.1,1094.8 390.0,1093.8 385.9,1092.8 381.8,1091.9 377.7,1091.0 373.6,1090.2 369.5,1089.4 365.5,1088.7 361.4,1088.1 357.4,1087.6 353.3,1087.1 349.2,1086.8 345.1,1086.5 341.0,1086.2 337.0,1086.0 332.9,1085.9 328.7,1085.8 324.6,1085.7 320.5,1085.6 316.4,1085.6 312.3,1085.6 308.2,1085.6 304.1,1085.6 300.0,1085.6 296.0,1085.7 291.9,1085.8 287.9,1086.0 283.8,1086.2 279.7,1086.4 275.6,1086.6 271.4,1086.9 267.2,1087.3 263.0,1087.6 258.7,1088.1 254.3,1088.5 249.9,1089.1 245.5,1089.7 241.1,1090.3 236.6,1091.0 232.1,1091.6 227.5,1092.3 223.0,1093.0 218.5,1093.7 214.0,1094.3 209.5,1095.0 208.4,1094.9 207.5,1094.5 206.7,1093.7 206.4,1092.6 206.4,1091.6 206.9,1090.6 207.7,1089.9Z"/><path d="M780.6,1397.0 780.8,1399.2 780.9,1401.4 780.9,1403.6 781.0,1405.8 781.0,1407.9 781.1,1410.1 781.2,1412.2 781.3,1414.3 781.5,1416.4 781.7,1418.5 782.0,1420.6 782.5,1422.8 783.0,1425.0 783.6,1427.4 784.3,1429.8 785.0,1432.2 785.8,1434.7 786.7,1437.1 787.6,1439.6 788.5,1442.1 789.5,1444.6 790.4,1447.0 791.4,1449.4 792.4,1451.7 793.4,1454.0 794.4,1456.2 795.4,1458.4 796.5,1460.6 797.6,1462.8 798.7,1464.9 799.8,1467.0 800.9,1469.2 802.1,1471.3 803.3,1473.4 804.5,1475.5 805.6,1477.6 806.8,1479.7 808.0,1481.8 809.2,1483.8 810.4,1485.9 811.6,1487.9 812.9,1490.0 814.1,1492.0 815.4,1494.0 816.6,1496.1 817.9,1498.1 819.2,1500.2 820.4,1502.3 821.0,1503.9 820.9,1505.7 820.2,1507.3 818.9,1508.5 817.2,1509.1 815.5,1509.0 813.9,1508.2 812.7,1506.9 811.5,1504.9 810.2,1502.9 809.0,1500.8 807.7,1498.8 806.5,1496.7 805.2,1494.7 803.9,1492.6 802.7,1490.5 801.4,1488.4 800.2,1486.3 799.0,1484.1 797.8,1482.0 796.6,1479.8 795.4,1477.7 794.3,1475.5 793.1,1473.3 792.0,1471.1 790.9,1468.9 789.8,1466.6 788.7,1464.4 787.6,1462.1 786.5,1459.7 785.5,1457.4 784.5,1455.0 783.6,1452.6 782.6,1450.1 781.7,1447.6 780.7,1445.0 779.8,1442.4 778.9,1439.8 778.0,1437.2 777.2,1434.6 776.5,1432.0 775.8,1429.4 775.2,1426.9 774.6,1424.4 774.2,1421.9 773.9,1419.5 773.6,1417.1 773.5,1414.8 773.4,1412.5 773.3,1410.3 773.3,1408.1 773.3,1405.9 773.3,1403.7 773.3,1401.6 773.2,1399.5 773.1,1397.3 773.4,1395.9 774.1,1394.6 775.3,1393.8 776.7,1393.4 778.1,1393.6 779.4,1394.4 780.3,1395.5Z"/><path d="M814.1,1508.4 812.4,1508.1 810.7,1507.8 809.0,1507.5 807.4,1507.2 805.7,1506.9 804.1,1506.7 802.4,1506.4 800.8,1506.1 799.2,1505.9 797.6,1505.6 796.0,1505.4 794.4,1505.3 792.8,1505.2 791.3,1505.1 789.8,1505.0 788.4,1504.9 787.0,1504.8 785.6,1504.8 784.1,1504.8 782.6,1504.8 780.9,1504.8 779.2,1504.8 777.3,1504.9 775.3,1505.0 773.0,1505.2 770.5,1505.4 767.9,1505.6 765.2,1505.8 762.3,1506.0 759.4,1506.3 756.5,1506.6 753.6,1506.9 750.8,1507.2 748.1,1507.6 745.5,1508.0 743.0,1508.4 740.7,1508.8 738.4,1509.3 736.2,1509.9 733.9,1510.4 731.8,1511.0 729.6,1511.6 727.5,1512.2 725.5,1512.8 723.6,1513.4 721.7,1514.1 719.8,1514.7 718.1,1515.3 716.6,1515.7 715.2,1516.2 713.9,1516.6 712.7,1517.1 711.6,1517.5 710.4,1518.0 709.2,1518.5 708.0,1519.0 706.8,1519.5 705.5,1520.0 704.0,1520.6 702.6,1521.1 698.6,1521.7 694.6,1520.7 691.3,1518.2 689.3,1514.7 688.7,1510.6 689.7,1506.7 692.2,1503.4 695.7,1501.3 697.0,1500.9 698.2,1500.5 699.4,1500.1 700.6,1499.7 701.9,1499.2 703.3,1498.8 704.7,1498.3 706.2,1497.8 707.8,1497.3 709.5,1496.8 711.4,1496.4 713.3,1495.9 715.3,1495.6 717.3,1495.3 719.4,1495.0 721.6,1494.7 723.9,1494.5 726.2,1494.2 728.6,1493.9 731.1,1493.7 733.6,1493.4 736.1,1493.2 738.7,1493.1 741.3,1492.9 744.0,1492.8 746.8,1492.7 749.8,1492.6 752.8,1492.6 755.8,1492.6 758.8,1492.6 761.8,1492.6 764.7,1492.6 767.6,1492.7 770.3,1492.8 772.8,1492.9 775.2,1493.0 777.4,1493.1 779.4,1493.2 781.3,1493.3 783.1,1493.5 784.8,1493.6 786.4,1493.8 788.0,1494.1 789.5,1494.3 791.0,1494.5 792.5,1494.8 794.1,1495.1 795.7,1495.4 797.4,1495.6 799.2,1495.9 800.9,1496.3 802.6,1496.6 804.2,1497.0 805.9,1497.3 807.6,1497.7 809.2,1498.1 810.9,1498.5 812.5,1498.8 814.1,1499.2 815.8,1499.5 817.4,1500.2 818.6,1501.4 819.3,1503.0 819.3,1504.8 818.7,1506.4 817.5,1507.7 815.8,1508.4Z"/></g></svg>
<!--ARROW-END-->
<script>(function(){var w=window.innerWidth;if(w&&w<2900){document.documentElement.style.zoom=w/2938;}})();</script>
</body>
</html>
